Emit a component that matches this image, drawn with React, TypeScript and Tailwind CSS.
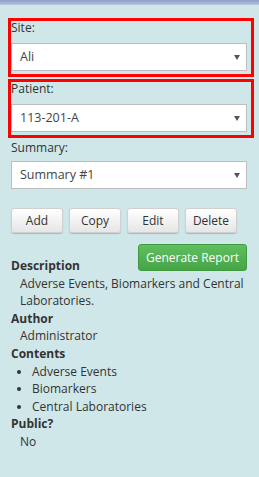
const font = { fontFamily: '"Open Sans", "Noto Sans", sans-serif' };

function Select({ value }: { value: string }) {
  return (
    <div className="flex h-[28px] items-center justify-between border border-[#bdbdbd] bg-white pl-[8px] pr-[6px] text-[12.5px] text-[#444]">
      <span>{value}</span>
      <svg viewBox="0 0 6 5" className="h-[5px] w-[6px] fill-[#555]">
        <path d="M0 0h6L3 5z" />
      </svg>
    </div>
  );
}

function Btn({ label }: { label: string }) {
  return (
    <button className="h-[25px] w-[52px] rounded-[3px] border border-[#d0d0d0] bg-gradient-to-b from-white to-[#e6e6e6] text-[12px] text-[#333] shadow-[0_1px_1px_rgba(0,0,0,0.2)]">
      {label}
    </button>
  );
}

export default function App() {
  return (
    <div className="h-[477px] w-[259px] overflow-hidden bg-[#cfe7e8] text-[12px] text-[#333]" style={font}>
      <div className="h-[5px] bg-gradient-to-b from-[#8c9dc6] to-[#b7c7dd]" />
      <div className="pl-[8px] pr-[5px] pt-[13px]">
        <div className="border-[3px] border-[#ff0000] pb-[3px] pr-[4px]">
          <div className="mb-[9px] pt-[1px] leading-[12px]">Site:</div>
          <Select value="Ali" />
        </div>
        <div className="mt-[2px] border-[3px] border-[#ff0000] pb-[3px] pr-[4px]">
          <div className="mb-[9px] pt-[1px] leading-[12px]">Patient:</div>
          <Select value="113-201-A" />
        </div>
        <div className="pl-[3px] pr-[7px] pt-[4px]">
          <div className="mb-[7px] leading-[12px]">Summary:</div>
          <Select value="Summary #1" />
          <div className="mt-[19px] flex gap-[6px]">
            <Btn label="Add" />
            <Btn label="Copy" />
            <Btn label="Edit" />
            <Btn label="Delete" />
          </div>
          <div className="mt-[11px] flex justify-end">
            <button className="h-[27px] w-[109px] rounded-[3px] border border-[#3e9a3e] bg-gradient-to-b from-[#5fbf5f] to-[#47a447] text-[12px] text-white">
              Generate Report
            </button>
          </div>
          <div className="-mt-[14px] leading-[17.6px]">
            <div className="font-bold">Description</div>
            <div className="pl-[9px]">Adverse Events, Biomarkers and Central Laboratories.</div>
            <div className="font-bold">Author</div>
            <div className="pl-[9px]">Administrator</div>
            <div className="font-bold">Contents</div>
            <ul className="list-disc pl-[21px]">
              <li>Adverse Events</li>
              <li>Biomarkers</li>
              <li>Central Laboratories</li>
            </ul>
            <div className="font-bold">Public?</div>
            <div className="pl-[9px]">No</div>
          </div>
        </div>
      </div>
    </div>
  );
}
